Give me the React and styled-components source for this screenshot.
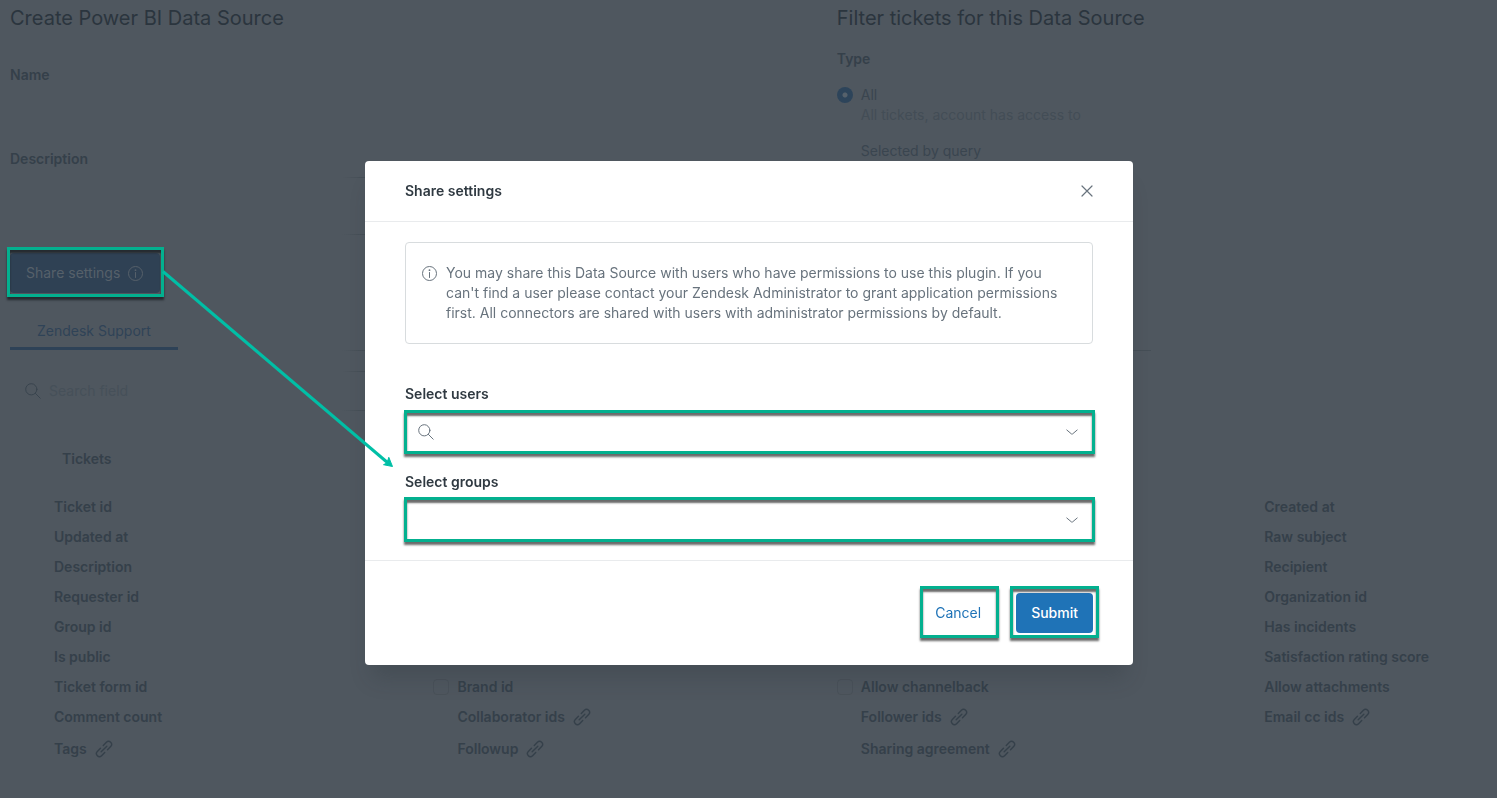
import React from "react";
import styled, { createGlobalStyle } from "styled-components";

const color = {
  page: "#4f575f",
  title: "#2b353e",
  label: "#35404a",
  option: "#3a454f",
  hint: "#434d56",
  faint: "#454e56",
  navy: "#2f4154",
  ink: "#2f3941",
  grey: "#68737d",
  line: "#e9ebed",
  border: "#d8dcde",
  blue: "#1f73b7",
  green: "#03b08f",
  arrow: "#00bfa6",
};

const fade = `linear-gradient(to right, transparent 332px, ${color.faint} 352px)`;

const GlobalStyle = createGlobalStyle`
  *, *::before, *::after { box-sizing: border-box; }
  body {
    margin: 0;
    background: ${color.page};
    color: ${color.label};
    font: 400 14px/20px Inter, "Liberation Sans", sans-serif;
  }
  #root { min-height: 100vh; }
  button, input, select, textarea { font: inherit; margin: 0; }
  h1, h2, h3, p, ul { margin: 0; padding: 0; }
`;

const Page = styled.main`
  position: relative;
  min-height: 100vh;
  overflow: hidden;
  padding: 4px 0 32px 10px;
`;

const Columns = styled.div`
  display: grid;
  grid-template-columns: 55.6% 1fr;
`;

const Title = styled.h1`
  color: ${color.title};
  font-size: 20px;
  font-weight: 400;
  line-height: 28px;
`;

const Form = styled.form`
  display: flex;
  flex-direction: column;
  align-items: flex-start;
`;

const Field = styled.div`
  display: flex;
  flex-direction: column;
  gap: 8px;
  width: 95%;
  margin-top: ${(p) => p.$top}px;
`;

const Label = styled.label`
  font-weight: 600;
`;

const PlainInput = styled.input`
  height: 40px;
  padding: 0 12px;
  border: 0;
  outline: 0;
  background: transparent;
  color: ${color.label};
`;

const LinedArea = styled.textarea`
  height: 58px;
  padding: 8px 12px;
  border: 0;
  outline: 0;
  resize: none;
  color: ${color.label};
  background: ${fade} top / 100% 1px no-repeat, ${fade} bottom / 100% 1px no-repeat;
`;

const Marked = styled.div`
  position: relative;
  margin-top: ${(p) => p.$top || 0}px;

  &::after {
    content: "";
    position: absolute;
    inset: ${(p) => p.$inset};
    border: 3px solid ${color.green};
    box-shadow: 0 3px 2px ${(p) => p.$shade || "#6b6b6b"}, inset 0 3px 2px ${(p) => p.$shade || "#6b6b6b"};
    pointer-events: none;
  }
`;

const ShareButton = styled.button`
  display: flex;
  align-items: center;
  gap: 8px;
  height: 40px;
  padding: 0 16px;
  border: 0;
  border-radius: 4px;
  background: ${color.navy};
  color: #56606a;
`;

const Type = styled.fieldset`
  margin: 17px 0 0;
  padding: 0;
  border: 0;
`;

const Legend = styled.legend`
  padding: 0;
  margin-bottom: 16px;
  font-weight: 600;
`;

const Option = styled.div`
  display: grid;
  grid-template-columns: 16px 1fr;
  column-gap: 8px;
  align-items: center;
  margin-bottom: 16px;
  color: ${color.option};
`;

const Radio = styled.input`
  appearance: none;
  width: 16px;
  height: 16px;
  border-radius: 50%;

  &:checked {
    background: radial-gradient(circle, #56616b 2px, #2d445a 3px);
  }
`;

const Hint = styled.p`
  grid-column: 2;
  color: ${color.hint};
`;

const Tabs = styled.div`
  width: 100%;
  max-width: 1141px;
  margin-top: 18px;
  padding-bottom: 1px;
  background: ${fade} bottom / 100% 1px no-repeat;
`;

const Tab = styled.button`
  display: block;
  height: 39px;
  padding: 4px 27px 0;
  border: 0;
  border-bottom: 3px solid #2e4257;
  background: transparent;
  color: #2f4357;
`;

const SearchBox = styled.div`
  display: flex;
  align-items: center;
  gap: 8px;
  width: 50%;
  height: 40px;
  margin-top: 20px;
  padding-left: 15px;
  color: #39444e;
  background: ${fade} top / 100% 1px no-repeat, ${fade} bottom / 100% 1px no-repeat;
`;

const SearchInput = styled.input`
  width: 200px;
  padding: 0;
  border: 0;
  outline: 0;
  background: transparent;

  &::placeholder {
    color: #465059;
    opacity: 1;
  }
`;

const GroupTitle = styled.h2`
  margin-top: 38px;
  padding-left: 52px;
  font-size: 14px;
  font-weight: 600;
  line-height: 20px;
`;

const FieldGrid = styled.div`
  display: grid;
  grid-template-columns: repeat(3, 27.5%) 1fr;
  grid-template-rows: repeat(7, 30px) 32px 32px;
  grid-auto-flow: column;
  margin-top: 28px;
  padding-left: 20px;
`;

const FieldItem = styled.label`
  grid-row: ${(p) => p.$row};
  grid-column: ${(p) => p.$col};
  display: flex;
  align-items: center;
  gap: 8px;
  height: 20px;
  font-weight: 600;
  white-space: nowrap;
`;

const Tick = styled.input`
  appearance: none;
  width: 16px;
  height: 16px;
  border: 1px solid ${(p) => (p.$outlined ? "#495159" : "transparent")};
  border-radius: 4px;
`;

const Layer = styled.div`
  position: fixed;
  inset: 0;
  display: flex;
  justify-content: center;
  align-items: flex-start;
  padding: 161px 0 0 1px;
`;

const Dialog = styled.section`
  width: 768px;
  max-width: 95%;
  border-radius: 4px;
  background: #fff;
  color: ${color.ink};
  box-shadow: 0 20px 20px -8px rgba(38, 46, 54, 0.25);
`;

const DialogHeader = styled.header`
  display: flex;
  align-items: center;
  justify-content: space-between;
  padding: 20px 38px 20px 40px;
  border-bottom: 1px solid ${color.line};
`;

const DialogTitle = styled.h2`
  font-size: 14px;
  font-weight: 600;
  line-height: 20px;
`;

const CloseButton = styled.button`
  display: grid;
  place-items: center;
  width: 16px;
  height: 16px;
  padding: 0;
  border: 0;
  background: transparent;
  color: ${color.grey};
`;

const DialogBody = styled.div`
  padding: 20px 40px;
`;

const Notice = styled.div`
  display: flex;
  align-items: flex-start;
  gap: 8px;
  margin-bottom: 40px;
  padding: 20px 20px 20px 16px;
  border: 1px solid ${color.border};
  border-radius: 4px;
  color: ${color.grey};

  svg { flex: none; margin-top: 2px; }
`;

const Picker = styled.div`
  & + & { margin-top: 20px; }
`;

const PickerLabel = styled.label`
  display: block;
  margin-bottom: 8px;
  font-weight: 600;
`;

const Control = styled.div`
  display: flex;
  align-items: center;
  gap: 8px;
  height: 40px;
  padding: 0 13px;
  color: ${color.grey};
`;

const ControlInput = styled.input`
  flex: 1;
  min-width: 0;
  border: 0;
  outline: 0;
  background: transparent;
`;

const ControlSelect = styled.select`
  flex: 1;
  min-width: 0;
  appearance: none;
  border: 0;
  outline: 0;
  background: transparent;
`;

const DialogFooter = styled.footer`
  display: flex;
  justify-content: flex-end;
  gap: 20px;
  padding: 32px 40px;
  border-top: 1px solid ${color.line};
`;

const ActionButton = styled.button`
  display: block;
  height: 40px;
  padding: 0 15px;
  border: 0;
  border-radius: 4px;
  background: ${(p) => (p.$primary ? color.blue : "transparent")};
  color: ${(p) => (p.$primary ? "#fff" : color.blue)};
  font-weight: ${(p) => (p.$primary ? 500 : 400)};
`;

const Arrow = styled.svg`
  position: fixed;
  top: 262px;
  left: 158px;
  pointer-events: none;
`;

const InfoIcon = () => (
  <svg width="16" height="16" viewBox="0 0 16 16" fill="none" stroke="currentColor" aria-hidden="true">
    <circle cx="7.5" cy="8.5" r="7" />
    <path d="M7.5 7.5v5" strokeLinecap="round" />
    <circle cx="7.5" cy="5.2" r="0.9" fill="currentColor" stroke="none" />
  </svg>
);

const SearchIcon = () => (
  <svg width="16" height="16" viewBox="0 0 16 16" fill="none" stroke="currentColor" strokeLinecap="round" aria-hidden="true">
    <circle cx="6.3" cy="6.3" r="5.6" />
    <path d="M10.4 10.4l4.8 4.8" />
  </svg>
);

const ChevronIcon = () => (
  <svg width="16" height="16" viewBox="0 0 16 16" fill="none" stroke="currentColor" strokeLinecap="round" aria-hidden="true">
    <path d="M2.8 6l4.6 3.9a1 1 0 0 0 1.2 0L13.2 6" />
  </svg>
);

const CloseIcon = () => (
  <svg width="16" height="16" viewBox="0 0 16 16" stroke="currentColor" strokeWidth="1.2" strokeLinecap="round" aria-hidden="true">
    <path d="M3 3l10 10M13 3L3 13" />
  </svg>
);

const LinkIcon = () => (
  <svg width="18" height="18" viewBox="0 0 18 18" fill="none" stroke="currentColor" strokeWidth="1.4" strokeLinecap="round" aria-hidden="true">
    <g transform="rotate(-45 9 9)">
      <path d="M11 6H15.400a3 3 0 0 1 0 6H11" />
      <path d="M7 12H2.600a3 3 0 0 1 0-6H7" />
      <path d="M5 9H13" />
    </g>
  </svg>
);

const fieldColumns = [
  {
    start: 1,
    names: ["Ticket id", "Updated at", "Description", "Requester id", "Group id", "Is public", "Ticket form id", "Comment count", "Tags"],
  },
  { start: 7, names: ["Brand id", "Collaborator ids", "Followup"] },
  { start: 7, names: ["Allow channelback", "Follower ids", "Sharing agreement"] },
  {
    start: 1,
    names: ["Created at", "Raw subject", "Recipient", "Organization id", "Has incidents", "Satisfaction rating score", "Allow attachments", "Email cc ids"],
  },
];

const linked = new Set(["Tags", "Collaborator ids", "Followup", "Follower ids", "Sharing agreement", "Email cc ids"]);
const outlined = new Set(["Brand id", "Allow channelback"]);

export default function App() {
  return (
    <>
      <GlobalStyle />
      <Page>
        <Columns>
          <Form>
            <Title>Create Power BI Data Source</Title>
            <Field $top={33}>
              <Label htmlFor="name">Name</Label>
              <PlainInput id="name" type="text" />
            </Field>
            <Field $top={16}>
              <Label htmlFor="description">Description</Label>
              <LinedArea id="description" />
            </Field>
            <Marked $top={18} $inset="-6px -4px -4px -3px" $shade="#252b30">
              <ShareButton type="button">
                Share settings
                <InfoIcon />
              </ShareButton>
            </Marked>
          </Form>
          <div>
            <Title as="h2">Filter tickets for this Data Source</Title>
            <Type>
              <Legend>Type</Legend>
              <Option>
                <Radio type="radio" name="type" id="type-all" defaultChecked />
                <label htmlFor="type-all">All</label>
                <Hint>All tickets, account has access to</Hint>
              </Option>
              <Option>
                <Radio type="radio" name="type" id="type-query" />
                <label htmlFor="type-query">Selected by query</label>
              </Option>
            </Type>
          </div>
        </Columns>

        <Tabs role="tablist">
          <Tab type="button" role="tab" aria-selected="true">Zendesk Support</Tab>
        </Tabs>

        <SearchBox>
          <SearchIcon />
          <SearchInput type="text" placeholder="Search field" aria-label="Search field" />
        </SearchBox>

        <GroupTitle>Tickets</GroupTitle>
        <FieldGrid>
          {fieldColumns.map((column, c) =>
            column.names.map((name, r) => (
              <FieldItem key={name} $col={c + 1} $row={column.start + r}>
                <Tick type="checkbox" $outlined={outlined.has(name)} />
                {name}
                {linked.has(name) && <LinkIcon />}
              </FieldItem>
            ))
          )}
        </FieldGrid>
      </Page>

      <Layer>
        <Dialog role="dialog" aria-modal="true" aria-labelledby="dialog-title">
          <DialogHeader>
            <DialogTitle id="dialog-title">Share settings</DialogTitle>
            <CloseButton type="button" aria-label="Close">
              <CloseIcon />
            </CloseButton>
          </DialogHeader>
          <DialogBody>
            <Notice>
              <InfoIcon />
              <p>
                You may share this Data Source with users who have permissions to use this plugin. If you can't find a
                user please contact your Zendesk Administrator to grant application permissions first. All connectors
                are shared with users with administrator permissions by default.
              </p>
            </Notice>
            <Picker>
              <PickerLabel htmlFor="users">Select users</PickerLabel>
              <Marked $inset="-2px -2px -2px -1px">
                <Control>
                  <SearchIcon />
                  <ControlInput id="users" type="text" role="combobox" aria-expanded="false" />
                  <ChevronIcon />
                </Control>
              </Marked>
            </Picker>
            <Picker>
              <PickerLabel htmlFor="groups">Select groups</PickerLabel>
              <Marked $inset="-3px -2px -2px -1px">
                <Control>
                  <ControlSelect id="groups" defaultValue="">
                    <option value="" />
                  </ControlSelect>
                  <ChevronIcon />
                </Control>
              </Marked>
            </Picker>
          </DialogBody>
          <DialogFooter>
            <Marked $inset="-7px -3px -5px 0">
              <ActionButton type="button">Cancel</ActionButton>
            </Marked>
            <Marked $inset="-7px -6px -5px -6px">
              <ActionButton type="submit" $primary>Submit</ActionButton>
            </Marked>
          </DialogFooter>
        </Dialog>
      </Layer>

      <Arrow width="240" height="210" viewBox="0 0 240 210" aria-hidden="true">
        <path d="M5 9.5L230 201" fill="none" stroke={color.arrow} strokeWidth="3" />
        <path d="M234.5 204.5l-9-1.8 3.5-1.8 1.8-5.6z" fill={color.arrow} stroke={color.arrow} />
      </Arrow>
    </>
  );
}
